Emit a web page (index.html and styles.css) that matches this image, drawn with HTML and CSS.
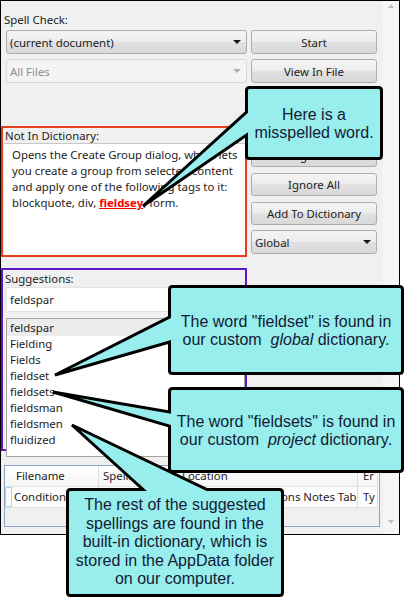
FILE: index.html
```html
<!DOCTYPE html>
<html>
<head>
<meta charset="utf-8">
<link rel="stylesheet" href="styles.css">
</head>
<body>
<div class="window">
  <div class="main">
    <div class="panes">
      <div class="left">
        <div class="lbl">Spell Check:</div>
        <div class="combo first"><span>(current document)</span><i class="arrow"></i></div>
        <div class="combo off"><span>All Files</span><i class="arrow"></i></div>
        <div class="box red">
          <div class="box-lbl">Not In Dictionary:</div>
          <div class="textbox">
            Opens the Create Group dialog, which lets<br>
            you create a group from selected content<br>
            and apply one of the following tags to it:<br>
            blockquote, div, <b class="miss">fieldsey</b>, form.
          </div>
        </div>
        <div class="box purple">
          <div class="box-lbl sug">Suggestions:</div>
          <div class="input">feldspar</div>
          <ul class="list">
            <li class="sel">feldspar</li>
            <li>Fielding</li>
            <li>Fields</li>
            <li>fieldset</li>
            <li>fieldsets</li>
            <li>fieldsman</li>
            <li>fieldsmen</li>
            <li>fluidized</li>
          </ul>
        </div>
      </div>
      <div class="right">
        <div class="btn tall">Start</div>
        <div class="btn tall g5">View In File</div>
        <div class="btn g3">Change</div>
        <div class="btn g6">Change All</div>
        <div class="btn g6">Ignore</div>
        <div class="btn g6">Ignore All</div>
        <div class="btn g6">Add To Dictionary</div>
        <div class="combo dict"><span>Global</span><i class="arrow"></i></div>
      </div>
    </div>
    <div class="grid">
      <div class="row head">
        <div class="cell c0"></div>
        <div class="cell c1">Filename</div>
        <div class="cell c2">Spelling</div>
        <div class="cell c3">Location</div>
        <div class="cell c4">Er</div>
      </div>
      <div class="row body">
        <div class="cell c0 pick"></div>
        <div class="cell c1">Conditions</div>
        <div class="cell c2">fieldsey</div>
        <div class="cell c3 clip"><span>Content/Conditions Notes Table</span></div>
        <div class="cell c4">Ty</div>
      </div>
    </div>
  </div>
  <div class="scrollbar">
    <i class="up"></i>
    <i class="down"></i>
  </div>
</div>

<svg class="overlay" width="413" height="607" viewBox="0 0 413 607">
  <g fill="#97eeec" stroke="#000" stroke-width="3" stroke-linejoin="miter">
    <path d="M249.5 87.5 H378.5 Q381.5 87.5 381.5 90.5 V155.5 Q381.5 158.5 378.5 158.5 H249.5 Q246.5 158.5 246.5 155.5 V135 L143 206 L246.5 112 V90.5 Q246.5 87.5 249.5 87.5 Z"/>
    <path d="M172.5 286.5 H399.5 Q402.5 286.5 402.5 289.5 V370.5 Q402.5 373.5 399.5 373.5 H172.5 Q169.5 373.5 169.5 370.5 V342 L55 375 L169.5 317 V289.5 Q169.5 286.5 172.5 286.5 Z"/>
    <path d="M172.5 388.5 H399.5 Q402.5 388.5 402.5 391.5 V468.5 Q402.5 471.5 399.5 471.5 H172.5 Q169.5 471.5 169.5 468.5 V426 L53 392 L169.5 412 V391.5 Q169.5 388.5 172.5 388.5 Z"/>
    <path d="M70.5 489.5 H143 L72 425 L207 489.5 H279.5 Q282.5 489.5 282.5 492.5 V592.5 Q282.5 595.5 279.5 595.5 H70.5 Q67.5 595.5 67.5 592.5 V492.5 Q67.5 489.5 70.5 489.5 Z"/>
  </g>
</svg>

<div class="callout k1"><p>Here is a<br>misspelled word.</p></div>
<div class="callout k2"><p>The word "fieldset" is found in<br>our custom&nbsp; <i>global</i> dictionary.</p></div>
<div class="callout k3"><p>The word "fieldsets" is found in<br>our custom&nbsp; <i>project</i> dictionary.</p></div>
<div class="callout k4"><p>The rest of the suggested<br>spellings are found in the<br>built-in dictionary, which is<br>stored in the AppData folder<br>on our computer.</p></div>
</body>
</html>
```

FILE: styles.css
```css
* { box-sizing: border-box; }

body {
  margin: 0;
  width: 413px;
  height: 607px;
  overflow: hidden;
  position: relative;
  background: #ffffff;
  font-family: "Noto Sans", "Open Sans", sans-serif;
  font-size: 11.4px;
  color: #1c1c1c;
}

.window {
  width: 400px;
  height: 535px;
  border: 1px solid #000;
  background: #f0f0f0;
  display: flex;
}

.main {
  width: 382px;
  padding-top: 11px;
}

.panes {
  display: flex;
  gap: 4px;
  align-items: flex-start;
}

.left { width: 246px; }
.right { width: 126px; padding-top: 18px; }

.lbl {
  height: 16px;
  line-height: 16px;
  padding-left: 3px;
}

.combo, .btn {
  height: 24px;
  border: 1px solid #acacac;
  border-radius: 3px;
  background: linear-gradient(#f5f5f5, #ececec 48%, #e0e0e0 52%, #d9d9d9);
  display: flex;
  align-items: center;
  white-space: nowrap;
}

.combo {
  justify-content: space-between;
  padding: 0 5px 0 3px;
  margin-left: 5px;
}
.combo.first { margin-top: 2px; }
.combo.off {
  margin-top: 5px;
  background: #f4f4f4;
  border-color: #d9d9d9;
  color: #8e8e8e;
}

.arrow {
  width: 0;
  height: 0;
  border-left: 4px solid transparent;
  border-right: 4px solid transparent;
  border-top: 4px solid #1a1a1a;
}
.combo.off .arrow { border-top-color: #b0b0b0; }

.btn { justify-content: center; height: 23px; }
.btn.tall { height: 24px; }
.g3 { margin-top: 3px; }
.g5 { margin-top: 5px; }
.g6 { margin-top: 6px; }
.combo.dict { margin: 5px 0 0 0; padding-left: 3px; }

.box {
  border: 2px solid #e5401b;
}
.box.red {
  margin-top: 43px;
  height: 131px;
}
.box-lbl {
  line-height: 15px;
  padding-left: 2px;
}
.textbox {
  height: 112px;
  margin-left: 1px;
  background: #ffffff;
  border-top: 1px solid #c8c8c8;
  padding: 3px 0 0 8px;
  line-height: 16px;
  white-space: nowrap;
}
.miss {
  color: #ff0000;
  text-decoration: underline;
}

.box.purple {
  margin-top: 11px;
  height: 183px;
  border-color: #5b17c9;
}
.box-lbl.sug {
  padding-top: 1px;
  line-height: 16px;
}
.input {
  height: 25px;
  margin-left: 3px;
  background: #ffffff;
  border: 1px solid #e4e4e4;
  padding-left: 3px;
  line-height: 23px;
}
.list {
  list-style: none;
  margin: 6px 0 0 3px;
  padding: 0;
  height: 139px;
  background: #ffffff;
  border: 1px solid #a3a3a3;
  position: relative;
}
.list li {
  line-height: 16px;
  padding-left: 3px;
}
.list li.sel {
  background: #ececec;
  line-height: 17px;
}

.grid {
  margin: 14px 0 0 3px;
  width: 376px;
  height: 62px;
  border: 1px solid #8ca5c6;
  background: #f0f0f0;
}
.row {
  display: flex;
  height: 21px;
  border-bottom: 1px solid #e2e2e2;
}
.row.head { background: linear-gradient(#ffffff, #f5f5f5); }
.row.body { background: #fdfdfd; }
.cell {
  line-height: 20px;
  padding-left: 4px;
  border-right: 1px solid #dcdcdc;
  white-space: nowrap;
  overflow: hidden;
}
.c0 { width: 7px; padding: 0; border-right: none; }
.c1 { width: 87px; }
.c2 { width: 79px; }
.c3 { width: 180px; }
.c4 { width: 20px; padding-left: 5px; }
.body .c1 { padding-left: 2px; }
.pick {
  border: 1px solid #a8d3f3;
  background: #ffffff;
}
.clip {
  display: flex;
  justify-content: flex-end;
}
.clip span { margin-right: -9px; }

.scrollbar {
  width: 16px;
  background: #f6f6f6;
  display: flex;
  flex-direction: column;
  justify-content: space-between;
  align-items: center;
  padding: 3px 0 10px;
}
.up, .down {
  width: 0;
  height: 0;
  border-left: 3px solid transparent;
  border-right: 3px solid transparent;
}
.up { border-bottom: 4px solid #bdbdbd; }
.down { border-top: 4px solid #bdbdbd; }

.overlay {
  position: absolute;
  left: 0;
  top: 0;
  pointer-events: none;
}

.callout {
  position: absolute;
  display: flex;
  align-items: center;
  justify-content: center;
  text-align: center;
  font-family: "Liberation Sans", Arial, sans-serif;
  font-size: 16px;
  line-height: 18.5px;
  color: #141a35;
  white-space: nowrap;
}
.callout p { margin: 0; }
.callout i { font-style: italic; }
.k1 { left: 245px; top: 86px; width: 138px; height: 74px; padding-top: 2px; line-height: 18px; }
.k2 { left: 168px; top: 285px; width: 236px; height: 90px; padding-top: 2px; }
.k3 { left: 168px; top: 387px; width: 236px; height: 86px; padding-top: 2px; }
.k4 { left: 66px; top: 488px; width: 218px; height: 109px; }
```
